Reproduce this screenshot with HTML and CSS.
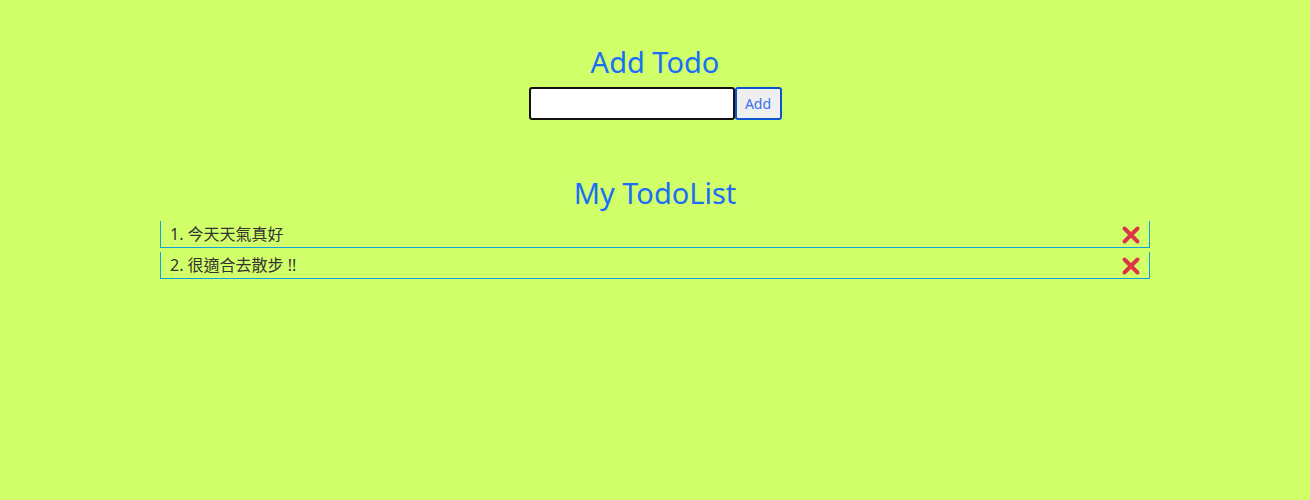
FILE: index.html
```html
<!DOCTYPE html>
<html lang="zh-Hant">
<head>
<meta charset="utf-8">
<title>Todo</title>
<link rel="stylesheet" href="styles.css">
</head>
<body>
<main class="app">
  <section class="add">
    <h2 class="title">Add Todo</h2>
    <form class="add-form">
      <input class="add-input" type="text">
      <button class="add-btn" type="button">Add</button>
    </form>
  </section>
  <section class="list-section">
    <h2 class="title">My TodoList</h2>
    <ul class="todo-list">
      <li class="todo-item">
        <span class="todo-text">1. 今天天氣真好</span>
        <svg class="del" width="20" height="20" viewBox="0 0 20 20"><path d="M3.5 3.5L16.5 16.5M16.5 3.5L3.5 16.5" stroke="#dc3545" stroke-width="4" stroke-linecap="round"/></svg>
      </li>
      <li class="todo-item">
        <span class="todo-text">2. 很適合去散步 !!</span>
        <svg class="del" width="20" height="20" viewBox="0 0 20 20"><path d="M3.5 3.5L16.5 16.5M16.5 3.5L3.5 16.5" stroke="#dc3545" stroke-width="4" stroke-linecap="round"/></svg>
      </li>
    </ul>
  </section>
</main>
</body>
</html>
```
FILE: styles.css
```css
html, body {
  margin: 0;
  padding: 0;
}
body {
  background: #d1ff69;
  font-family: "Noto Sans", "Noto Sans CJK TC", sans-serif;
  color: #333;
  height: 500px;
}
.app {
  width: 990px;
  margin: 0 auto;
  padding-top: 42px;
}
.title {
  margin: 0;
  text-align: center;
  font-weight: 400;
  font-size: 29px;
  line-height: 40px;
  color: #1a6ef8;
}
.add-form {
  display: flex;
  justify-content: center;
  margin: 5px 0 0;
}
.add-input {
  box-sizing: border-box;
  width: 206px;
  height: 33px;
  border: 2px solid #111;
  border-radius: 3px;
  background: #fff;
  margin: 0;
}
.add-btn {
  box-sizing: border-box;
  width: 47px;
  height: 33px;
  margin: 0;
  border: 2px solid #0d55d0;
  border-radius: 3px;
  background: #efefef;
  color: #3b6ff0;
  font-family: "Noto Sans", sans-serif;
  font-size: 14px;
  padding: 0;
}
.list-section {
  margin-top: 53px;
}
.todo-list {
  list-style: none;
  margin: 8px 0 0;
  padding: 0;
  display: flex;
  flex-direction: column;
  gap: 4px;
}
.todo-item {
  display: flex;
  align-items: center;
  justify-content: space-between;
  height: 26px;
  border: 1px solid #129ee0;
  border-top: none;
  padding: 0 8px 0 9px;
  font-size: 16px;
}
.todo-text {
  font-family: "Noto Sans", "Noto Sans CJK TC", sans-serif;
  line-height: 26px;
}
.del {
  display: block;
  margin-top: 1px;
}
```
